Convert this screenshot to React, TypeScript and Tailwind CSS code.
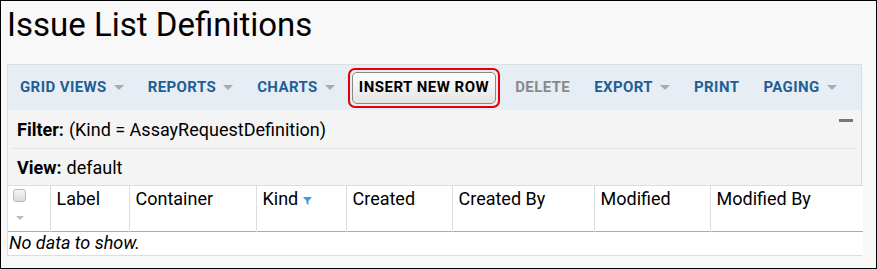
import { useState } from "react";

const menu = [
  { label: "GRID VIEWS", caret: true },
  { label: "REPORTS", caret: true },
  { label: "CHARTS", caret: true },
];

const tail = [
  { label: "EXPORT", caret: true },
  { label: "PRINT", caret: false },
  { label: "PAGING", caret: true },
];

const columns = [
  { label: "Label", w: "w-[79px]" },
  { label: "Container", w: "w-[127px]" },
  { label: "Kind", w: "w-[90px]", filtered: true },
  { label: "Created", w: "w-[106px]" },
  { label: "Created By", w: "w-[142px]" },
  { label: "Modified", w: "w-[116px]" },
  { label: "Modified By", w: "w-[153px]" },
];

function Caret() {
  return <span className="ml-[7px] inline-block h-0 w-0 border-x-[5px] border-t-[5px] border-x-transparent border-t-[#aaaaaa]" />;
}

function MenuItem({ label, caret }: { label: string; caret: boolean }) {
  return (
    <button className="flex items-center text-[15px] font-bold tracking-[0.4px] text-[#1f5f94]">
      {label}
      {caret && <Caret />}
    </button>
  );
}

export default function App() {
  const [checked, setChecked] = useState(false);

  return (
    <div
      className="h-[269px] w-[877px] overflow-hidden border border-black bg-[#f8f8f8] pl-[6px] pr-[14px]"
      style={{ fontFamily: "Roboto, 'Liberation Sans', sans-serif" }}
    >
      <h1 className="mt-[4px] h-[59px] text-[33px] leading-[40px] text-black">Issue List Definitions</h1>

      <div className="border border-[#dddddd] bg-[#f4f4f4]">
        {/* Toolbar */}
        <div className="flex h-[45px] items-center gap-[24px] bg-[#e6edf4] pl-[12px]">
          {menu.map((m) => (
            <MenuItem key={m.label} label={m.label} caret={m.caret} />
          ))}
          <div className="-ml-[11px] rounded-[7px] border-2 border-[#e00000] p-[2px]">
            <button className="h-[32px] rounded-[5px] border border-[#888888] bg-gradient-to-b from-[#ffffff] to-[#e4e4e4] px-[6px] text-[15px] font-bold tracking-[0.5px] text-black">
              INSERT NEW ROW
            </button>
          </div>
          <span className="-ml-[9px] text-[15px] font-bold tracking-[0.4px] text-[#8a8a8a]">DELETE</span>
          {tail.map((m) => (
            <MenuItem key={m.label} label={m.label} caret={m.caret} />
          ))}
        </div>

        {/* Filter */}
        <div className="relative mx-[4px] flex h-[39px] items-center border-b border-[#e4e4e4] pl-[5px] text-[18px] text-black">
          <b className="mr-[5px]">Filter:</b>(Kind = AssayRequestDefinition)
          <span className="absolute right-[4px] top-[9px] h-[3px] w-[14px] bg-[#777777]" />
        </div>
        <div className="flex h-[36px] items-center pl-[9px] text-[18px] text-black">
          <b className="mr-[5px]">View:</b>default
        </div>

        {/* Grid */}
        <table className="w-full table-fixed border-collapse bg-white text-[18px] text-black">
          <thead>
            <tr className="h-[46px] border-y border-b-[#aaaaaa] border-t-[#dddddd]">
              <th className="w-[42px] border-r border-[#dddddd] p-0 align-top">
                <div className="flex flex-col items-start pl-[5px] pt-[3px]">
                  <input
                    type="checkbox"
                    checked={checked}
                    onChange={() => setChecked(!checked)}
                    className="h-[13px] w-[13px] appearance-none rounded-[3px] border border-[#bbbbbb] bg-gradient-to-b from-[#f4f4f4] to-[#dcdcdc]"
                  />
                  <span className="ml-[3px] mt-[14px] h-0 w-0 border-x-[4px] border-t-[4px] border-x-transparent border-t-[#bbbbbb]" />
                </div>
              </th>
              {columns.map((c) => (
                <th key={c.label} className={`${c.w} border-r border-[#dddddd] px-[6px] pt-[2px] text-left align-top font-normal leading-[22px] last:border-r-0`}>
                  <span className="inline-flex items-center">
                    {c.label}
                    {c.filtered && (
                      <svg className="ml-[5px] mt-[3px]" width="9" height="8" viewBox="0 0 9 8">
                        <path d="M0 0h9L5.5 4v4l-2-1.5V4z" fill="#3d9bd8" />
                      </svg>
                    )}
                  </span>
                </th>
              ))}
            </tr>
          </thead>
          <tbody>
            <tr className="h-[23px]">
              <td colSpan={8} className="px-[1px] text-[18px] italic leading-[22px]">
                No data to show.
              </td>
            </tr>
          </tbody>
        </table>
      </div>
    </div>
  );
}
